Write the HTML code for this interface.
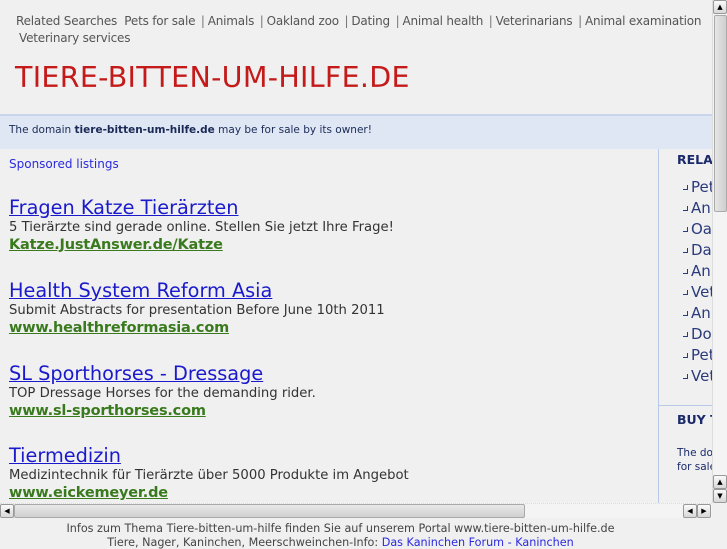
<!DOCTYPE html>
<html><head><meta charset="utf-8"><style>
*{margin:0;padding:0;box-sizing:border-box}
body{width:727px;height:545px;background:#f0f0f0;font-family:"DejaVu Sans","Liberation Sans",sans-serif;position:relative;overflow:hidden}
.abs{position:absolute;white-space:nowrap}
.rs{left:16px;top:14px;font-size:12px;color:#555;letter-spacing:-0.2px}
.rs span{color:#777;margin:0 3px 0 2px}
.title{left:15px;top:61px;font-size:28.5px;color:#c41a1a;letter-spacing:0.3px}
.band{left:0;top:114px;width:712px;height:35px;background:#dfe6f4;border-top:2px solid #c9d5ec}
.band .t{position:absolute;left:9px;top:8px;font-size:10.5px;color:#1a2a55}
.sp{left:9px;top:157px;font-size:12px;color:#2a2adf}
.ad{position:absolute;left:9px;white-space:nowrap}
.ad a{display:block;font-size:19.3px;color:#1a1acc;text-decoration:underline;line-height:22px}
.ad .d{font-size:13.2px;color:#333;line-height:17px}
.ad .u{font-size:14.5px;color:#3a7a1e;font-weight:bold;text-decoration:underline;line-height:18px;letter-spacing:-0.2px}
.rcol{left:658px;top:149px;width:54px;height:354px;border-left:1px solid #b8c8e8;overflow:hidden}
.rcol .h{position:absolute;left:18px;font-size:12.5px;font-weight:bold;color:#1a2a6a}
.rcol .li{position:absolute;left:32px;font-size:15px;color:#2a3a7a}
.rcol .li:before{content:"";position:absolute;left:-8px;top:7px;width:4px;height:4px;border-right:1px solid #2a3a7a;border-bottom:1px solid #2a3a7a}
.sep{position:absolute;left:0;top:256px;width:60px;border-top:1px solid #b8c8e8}
.small{position:absolute;left:18px;font-size:10.5px;color:#1a2a6a}
.vs{left:712px;top:0;width:15px;height:503px;background:#f4f4f4;border-left:1px solid #ddd}
.btn{position:absolute;width:14px;height:14px;background:linear-gradient(#fafafa,#d8d8d8);border:1px solid #999;border-radius:2px;font-size:7px;line-height:12px;text-align:center;color:#000}
.hs{left:0;top:503px;width:712px;height:15px;background:#f4f4f4;border-top:1px dotted #ddd}
.foot{left:0;width:681px;text-align:center;font-size:11.2px;color:#444}
</style></head><body>
<div class="abs rs">Related Searches&nbsp; Pets for sale <span>|</span>Animals <span>|</span>Oakland zoo <span>|</span>Dating <span>|</span>Animal health <span>|</span>Veterinarians <span>|</span>Animal examination</div>
<div class="abs rs" style="top:31px;left:19px">Veterinary services</div>
<div class="abs title">TIERE-BITTEN-UM-HILFE.DE</div>
<div class="abs band"><div class="t">The domain <b>tiere-bitten-um-hilfe.de</b> may be for sale by its owner!</div></div>
<div class="abs sp">Sponsored listings</div>
<div class="ad" style="top:197px"><a>Fragen Katze Tierärzten</a><div class="d">5 Tierärzte sind gerade online. Stellen Sie jetzt Ihre Frage!</div><div class="u">Katze.JustAnswer.de/Katze</div></div>
<div class="ad" style="top:280px"><a>Health System Reform Asia</a><div class="d">Submit Abstracts for presentation Before June 10th 2011</div><div class="u">www.healthreformasia.com</div></div>
<div class="ad" style="top:363px"><a>SL Sporthorses - Dressage</a><div class="d">TOP Dressage Horses for the demanding rider.</div><div class="u">www.sl-sporthorses.com</div></div>
<div class="ad" style="top:445px"><a>Tiermedizin</a><div class="d">Medizintechnik für Tierärzte über 5000 Produkte im Angebot</div><div class="u">www.eickemeyer.de</div></div>
<div class="abs rcol">
<div class="h" style="top:3px">RELATED</div>
<div class="li" style="top:29px">Pets</div>
<div class="li" style="top:50px">Animals</div>
<div class="li" style="top:71px">Oakland</div>
<div class="li" style="top:92px">Dating</div>
<div class="li" style="top:113px">Animal</div>
<div class="li" style="top:134px">Veterinarians</div>
<div class="li" style="top:155px">Animal</div>
<div class="li" style="top:176px">Dogs</div>
<div class="li" style="top:197px">Pets</div>
<div class="li" style="top:218px">Veterinary</div>
<div class="sep"></div>
<div class="h" style="top:263px">BUY THIS</div>
<div class="small" style="top:298px">The domain</div>
<div class="small" style="top:312px">for sale</div>
</div>
<div class="abs vs">
<div class="btn" style="left:0;top:0">▲</div>
<div style="position:absolute;left:1px;top:15px;width:13px;height:197px;background:linear-gradient(90deg,#e6e6e6,#cfcfcf);border:1px solid #aaa;border-radius:2px"></div>
<div class="btn" style="left:0;top:475px">▲</div>
<div class="btn" style="left:0;top:489px">▼</div>
</div>
<div class="abs hs">
<div class="btn" style="left:0;top:0">◀</div>
<div style="position:absolute;left:14px;top:0;width:511px;height:14px;background:linear-gradient(#e8e8e8,#d0d0d0);border:1px solid #aaa;border-radius:2px"></div>
<div class="btn" style="left:683px;top:0">◀</div>
<div class="btn" style="left:697px;top:0">▶</div>
</div>
<div class="abs foot" style="top:522px">Infos zum Thema Tiere-bitten-um-hilfe finden Sie auf unserem Portal www.tiere-bitten-um-hilfe.de</div>
<div class="abs foot" style="top:536px">Tiere, Nager, Kaninchen, Meerschweinchen-Info: <span style="color:#2a2adf">Das Kaninchen Forum - Kaninchen</span></div>
</body></html>
